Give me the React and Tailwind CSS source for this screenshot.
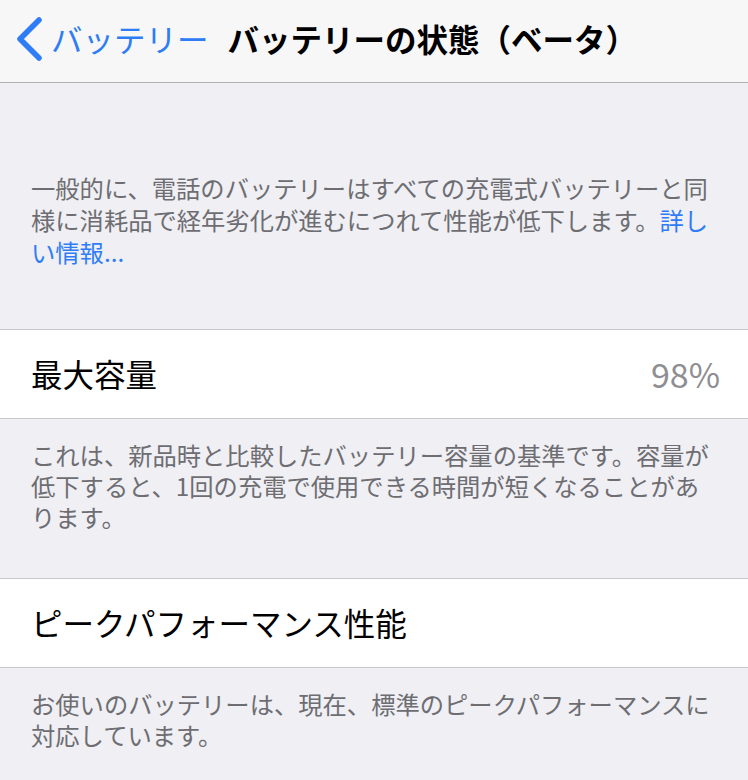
import React from "react";

const font = { fontFamily: '"Noto Sans CJK JP", "Noto Sans", sans-serif' };

const BackChevron = () => (
  <svg width="28" height="44" viewBox="0 0 28 44" fill="none" className="shrink-0">
    <path
      d="M24 3 L5 22 L24 41"
      stroke="#2f7df6"
      strokeWidth="5.5"
      strokeLinecap="round"
      strokeLinejoin="round"
    />
  </svg>
);

const Row = ({ label, value }) => (
  <div className="flex h-[90px] items-center justify-between border-y border-[#c8c7cc] bg-white pl-[31px] pr-[28px]">
    <span className="text-[31.5px] leading-none text-black">{label}</span>
    {value && <span className="text-[34px] leading-none text-[#8e8e93]">{value}</span>}
  </div>
);

const Footer = ({ children, className }) => (
  <div className={`pl-[31px] pr-[31px] text-[24.3px] leading-[31px] text-[#6d6d72] ${className}`}>
    {children}
  </div>
);

export default function App() {
  return (
    <div className="h-[780px] w-[748px] overflow-hidden bg-[#efeff4]" style={font}>
      {/* Nav bar */}
      <div className="flex h-[83px] items-center border-b border-[#b1b1b3] bg-[#f7f7f7] pl-[15px] pb-[4px]">
        <BackChevron />
        <span className="ml-[8px] text-[31.5px] leading-none text-[#2f7df6]">バッテリー</span>
        <span className="ml-[19px] text-[31.5px] font-bold leading-none text-black">
          バッテリーの状態（ベータ）
        </span>
      </div>

      {/* Intro */}
      <div className="pl-[31px] pr-[31px] pt-[89px] pb-[61px] text-[24.3px] leading-[32px] text-[#6d6d72]">
        一般的に、電話のバッテリーはすべての充電式バッテリーと同様に消耗品で経年劣化が進むにつれて性能が低下します。
        <span className="text-[#2f7df6]">詳しい情報...</span>
      </div>

      <Row label="最大容量" value="98%" />
      <Footer className="pt-[20px] pb-[46px]">
        これは、新品時と比較したバッテリー容量の基準です。容量が低下すると、1回の充電で使用できる時間が短くなることがあります。
      </Footer>

      <Row label="ピークパフォーマンス性能" />
      <Footer className="pt-[20px]">
        お使いのバッテリーは、現在、標準のピークパフォーマンスに対応しています。
      </Footer>
    </div>
  );
}
